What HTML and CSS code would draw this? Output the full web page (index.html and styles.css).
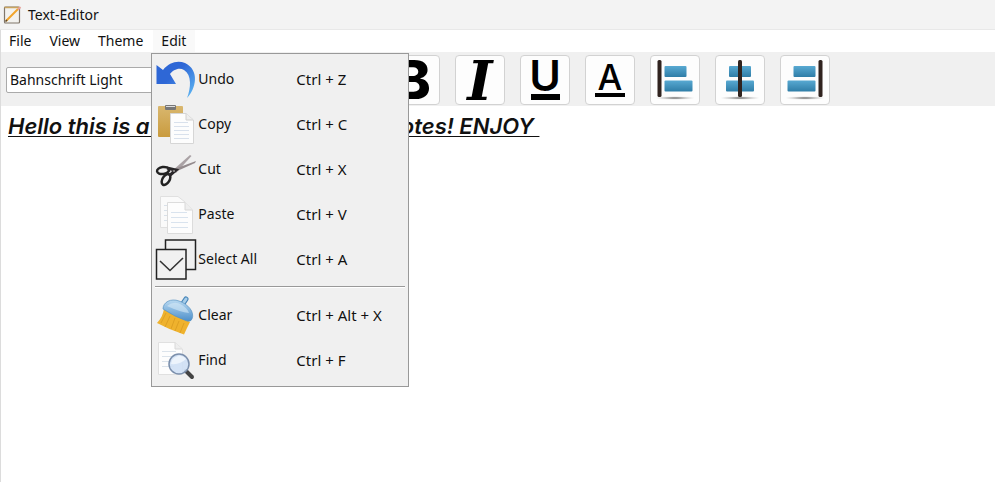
FILE: index.html
```html
<!DOCTYPE html>
<html lang="en">
<head>
<meta charset="utf-8">
<title>Text-Editor</title>
<link rel="stylesheet" href="styles.css">
</head>
<body>
<header class="titlebar">
  <svg class="app-icon" width="18" height="18" viewBox="0 0 18 18" aria-hidden="true">
    <rect x="1.500" y="1" width="15" height="16" rx="1" fill="#f3f2ef" stroke="#80766a" stroke-width="1.2"/>
    <path d="M1.500 1.500H16" stroke="#c9a45f" stroke-width="1.500"/>
    <path d="M3 15L15 3" stroke="#f2a52b" stroke-width="2"/>
    <path d="M15 3.500L17.500 1" stroke="#e7a19a" stroke-width="2"/>
    <path d="M2.500 15.500L4 14" stroke="#55442d" stroke-width="1.500"/>
  </svg>
  <span>Text-Editor</span>
</header>
<div class="window">
  <nav class="menubar">
    <button class="menu-title">File</button>
    <button class="menu-title">View</button>
    <button class="menu-title">Theme</button>
    <div class="menu-holder">
      <button class="menu-title open" aria-expanded="true">Edit</button>
      <div class="menu">
        <button class="item">
          <svg width="42" height="44" viewBox="0 0 42 44" aria-hidden="true">
            <defs><linearGradient id="undo" x1="0" y1="0" x2="1" y2="1"><stop offset=".4" stop-color="#2e67d6"/><stop offset="1" stop-color="#62bdf5"/></linearGradient></defs>
            <path d="M1.500 8L8 13C14 5 23 3 30 6C45 13 41 32 32 41C36 31 37 18 29 13C24 10 18 13 15 17L21 27H1.500Z" fill="url(#undo)"/>
          </svg>
          <span class="name">Undo</span><span class="keys">Ctrl + Z</span>
        </button>
        <button class="item">
          <svg width="42" height="44" viewBox="0 0 42 44" aria-hidden="true">
            <defs><linearGradient id="board" x1="0" y1="0" x2="0" y2="1"><stop offset="0" stop-color="#d9b76f"/><stop offset="1" stop-color="#c99b3e"/></linearGradient></defs>
            <rect x="3" y="4" width="25" height="31" rx="1" fill="url(#board)"/>
            <rect x="10" y="3" width="11" height="5" rx="1" fill="#777"/><path d="M11 4.500H20" stroke="#ddd"/>
            <path d="M15.500 11.500H31L38.500 18V41.500H15.500Z" fill="#fdfdfd" stroke="#d6d6d6"/>
            <path d="M31 11.500V18H38" fill="#eee" stroke="#d0d0d0"/>
            <path d="M19 20.500H33M19 24.500H34M19 28.500H34M19 32.500H34M19 36.500H34" stroke="#d9e1ec"/>
          </svg>
          <span class="name">Copy</span><span class="keys">Ctrl + C</span>
        </button>
        <button class="item">
          <svg width="42" height="44" viewBox="0 0 42 44" aria-hidden="true">
            <path d="M17 24L35 8L36.500 9L21 26Z" fill="#aaa2a5"/>
            <path d="M14 24L41 14L40 16L20 25Z" fill="#948b8e"/>
            <ellipse cx="8" cy="23.500" rx="6" ry="3.500" transform="rotate(-8 8 23.500)" fill="none" stroke="#222" stroke-width="2.500"/>
            <ellipse cx="11" cy="32.500" rx="3.500" ry="6" transform="rotate(32 11 32.500)" fill="none" stroke="#222" stroke-width="2.500"/>
            <path d="M12 21L21 23L14 29" fill="none" stroke="#292729" stroke-width="3"/>
            <circle cx="19" cy="24" r="1" fill="#999"/>
          </svg>
          <span class="name">Cut</span><span class="keys">Ctrl + X</span>
        </button>
        <button class="item">
          <svg width="42" height="44" viewBox="0 0 42 44" aria-hidden="true">
            <path d="M5.500 4.500H23L30 10V35.500H5.500Z" fill="#fafafa" stroke="#e0e0e0"/>
            <path d="M9 13.500H12M9 18.500H12M9 23.500H12M9 28.500H12" stroke="#d9e1e9"/>
            <path d="M12.500 10.500H30L37.500 18V41.500H12.500Z" fill="#fdfdfd" stroke="#dcdcdc"/>
            <path d="M30 10.500V18H37" fill="#eee" stroke="#d8d8d8"/>
            <path d="M16 20.500H32M16 25.500H33M16 30.500H33M16 35.500H33" stroke="#d9e3ee"/>
          </svg>
          <span class="name">Paste</span><span class="keys">Ctrl + V</span>
        </button>
        <button class="item">
          <svg width="42" height="44" viewBox="0 0 42 44" aria-hidden="true">
            <path d="M10.500 12V3H40.500V32.500H31" fill="none" stroke="#222" stroke-width="1.500"/>
            <rect x="1.500" y="12.500" width="29.500" height="29.500" fill="#f1f1f1" stroke="#222" stroke-width="1.500"/>
            <path d="M5 24L15 33.500L28 21" fill="none" stroke="#333" stroke-width="1.600"/>
          </svg>
          <span class="name">Select All</span><span class="keys">Ctrl + A</span>
        </button>
        <hr class="divider">
        <button class="item">
          <svg width="42" height="44" viewBox="0 0 42 44" aria-hidden="true">
            <defs><linearGradient id="brush" x1="0" y1="0" x2="0" y2="1"><stop offset="0" stop-color="#b9d9f1"/><stop offset="1" stop-color="#4c8fca"/></linearGradient></defs>
            <path d="M9 16L35 29C33 33 31 37 29 41.500Q15 37 2 30C6 26 8 21 9 16Z" fill="#efb22d"/>
            <path d="M11 20L6 30M15 23L10 34M20 25L16 36M24 28L20 38M29 30L25 40" stroke="#d89a20" stroke-width=".8"/>
            <path d="M27 12L31 6" stroke="#4685b8" stroke-width="5" stroke-linecap="round"/>
            <path d="M27 12L31 6" stroke="#a7cde9" stroke-width="3" stroke-linecap="round"/>
            <path d="M8 16C8 9 16 5 24 8C33 11 40 19 37 26Q36 29 32 28Q20 24 8 16Z" fill="url(#brush)" stroke="#5792c1" stroke-width=".7"/>
            <path d="M12 13Q19 7 27 12Q32 15 34 20Q25 19 12 13Z" fill="#d5e9f7" opacity=".6"/>
          </svg>
          <span class="name">Clear</span><span class="keys">Ctrl + Alt + X</span>
        </button>
        <button class="item">
          <svg width="42" height="44" viewBox="0 0 42 44" aria-hidden="true">
            <path d="M3.500 4.500H20L27.500 11V36.500H3.500Z" fill="#fdfdfd" stroke="#e0e0e0"/>
            <path d="M20 4.500V11H27" fill="#eee" stroke="#d8d8d8"/>
            <path d="M7 13.500H21M7 18.500H23M7 23.500H19M7 28.500H19" stroke="#dbe3eb"/>
            <path d="M31 33L37 39" stroke="#444" stroke-width="4" stroke-linecap="round"/>
            <circle cx="24" cy="26" r="10" fill="#cfe0f5" fill-opacity=".9" stroke="#7b8fac" stroke-width="1.500"/>
            <path d="M16 26A8.500 8.500 0 0 1 31 21Q25 27 16 26Z" fill="#edf4fc"/>
          </svg>
          <span class="name">Find</span><span class="keys">Ctrl + F</span>
        </button>
      </div>
    </div>
  </nav>
  <div class="toolbar">
    <select class="font-select" aria-label="Font family"><option>Bahnschrift Light</option></select>
    <div class="tools">
      <button class="tool" aria-label="Bold"><svg width="48" height="48" viewBox="0 0 48 48"><text class="glyph-b" x="22" y="43">B</text></svg></button>
      <button class="tool" aria-label="Italic"><svg width="48" height="48" viewBox="0 0 48 48"><text class="glyph-i" x="24" y="44">I</text></svg></button>
      <button class="tool" aria-label="Underline"><svg width="48" height="48" viewBox="0 0 48 48"><text class="glyph-u" x="24" y="35">U</text><path d="M10 38H39V44H10Z"/></svg></button>
      <button class="tool" aria-label="Text color"><svg width="48" height="48" viewBox="0 0 48 48"><text class="glyph-a" x="24" y="34">A</text><path d="M9 37H39V41H9Z"/></svg></button>
      <button class="tool" aria-label="Align left"><svg width="48" height="48" viewBox="0 0 48 48">
        <defs>
          <linearGradient id="bar" x1="0" y1="0" x2="0" y2="1"><stop offset="0" stop-color="#58a9d2"/><stop offset="1" stop-color="#2f7da7"/></linearGradient>
          <radialGradient id="shade"><stop offset=".3" stop-color="#999"/><stop offset="1" stop-color="#ddd" stop-opacity=".2"/></radialGradient>
        </defs>
        <ellipse cx="24" cy="42" rx="19" ry="1.700" fill="url(#shade)"/>
        <rect x="13.500" y="10" width="22" height="11" rx="1" fill="url(#bar)"/><rect x="13.500" y="24.500" width="28" height="11" rx="1" fill="url(#bar)"/>
        <rect x="6.500" y="4" width="4" height="37" rx="1.500" fill="#30231f"/></svg></button>
      <button class="tool" aria-label="Align center"><svg width="48" height="48" viewBox="0 0 48 48">
        <ellipse cx="24" cy="42" rx="19" ry="1.700" fill="url(#shade)"/>
        <rect x="13" y="10" width="22" height="11" rx="1" fill="url(#bar)"/><rect x="10" y="24.500" width="28" height="11" rx="1" fill="url(#bar)"/>
        <rect x="22" y="4" width="4" height="37" rx="1.500" fill="#30231f"/></svg></button>
      <button class="tool" aria-label="Align right"><svg width="48" height="48" viewBox="0 0 48 48">
        <ellipse cx="24" cy="42" rx="19" ry="1.700" fill="url(#shade)"/>
        <rect x="12.500" y="10" width="22" height="11" rx="1" fill="url(#bar)"/><rect x="6.500" y="24.500" width="28" height="11" rx="1" fill="url(#bar)"/>
        <rect x="37.500" y="4" width="4" height="37" rx="1.500" fill="#30231f"/></svg></button>
    </div>
  </div>
  <main class="editor" contenteditable="true" spellcheck="false" aria-label="Document"><p class="line">Hello this is a Text-Editor for taking notes! ENJOY&nbsp;</p></main>
</div>
</body>
</html>
```
FILE: styles.css
```css
* { box-sizing: border-box; }

body {
  margin: 0;
  min-height: 100vh;
  display: flex;
  flex-direction: column;
  background: #fff;
  color: #111;
  font: 14px/20px "Noto Sans", sans-serif;
}

button {
  border: 0;
  padding: 0;
  background: none;
  color: inherit;
  font: inherit;
}

svg { display: block; flex: none; overflow: visible; }

.titlebar {
  display: flex;
  align-items: center;
  gap: 7px;
  height: 30px;
  padding-left: 3px;
  background: #f3f3f3;
  border-bottom: 1px solid #e8e8e8;
}

.window {
  flex: 1;
  display: flex;
  flex-direction: column;
  border-left: 1px solid #dcdcdc;
}

.menubar { display: flex; gap: 1px; height: 22px; }
.menu-title { height: 22px; padding: 0 9px 0 8px; }
.menu-title.open { background: #f9f9f9; }
.menu-holder { position: relative; }

.menu {
  position: absolute;
  z-index: 2;
  top: 23px;
  left: -2px;
  width: 258px;
  padding: 2px 3px 4px;
  background: #f0f0f0;
  border: 1px solid #999;
}

.item {
  display: grid;
  grid-template-columns: 43px 98px 1fr;
  align-items: center;
  width: 100%;
  height: 45px;
  text-align: left;
}

.keys { font-size: 15px; }

.divider {
  height: 2px;
  margin: 5px 0 4px;
  border: 0;
  border-top: 1px solid #999;
  background: #fff;
}

.toolbar {
  display: flex;
  align-items: center;
  height: 54px;
  padding: 2px 5px 0;
  background: #f0f0f0;
}

.font-select {
  width: 200px;
  height: 26px;
  margin-right: 184px;
  padding: 0 3px;
  appearance: none;
  border: 1px solid #aaa;
  border-radius: 2px;
  background: #fff;
  color: #111;
  font: inherit;
}

.tools { display: flex; gap: 15px; }

.tool {
  width: 50px;
  height: 50px;
  border: 1px solid #d2d2d2;
  border-radius: 4px;
  background: #fdfdfd;
}

.tool text { text-anchor: middle; fill: #000; }
.glyph-b { font: 800 53px Inter, sans-serif; }
.glyph-i { font: italic 700 54px "DejaVu Serif", serif; }
.glyph-u { font: 600 43px Inter, sans-serif; }
.glyph-a { font: 500 35px Inter, sans-serif; }

.editor { flex: 1; padding: 8px 7px; outline: 0; }

.line {
  margin: 0;
  font: italic 600 22px/24px Inter, sans-serif;
  text-decoration: underline;
  text-decoration-thickness: 1px;
  text-decoration-skip-ink: none;
  text-underline-offset: 2px;
}
```
